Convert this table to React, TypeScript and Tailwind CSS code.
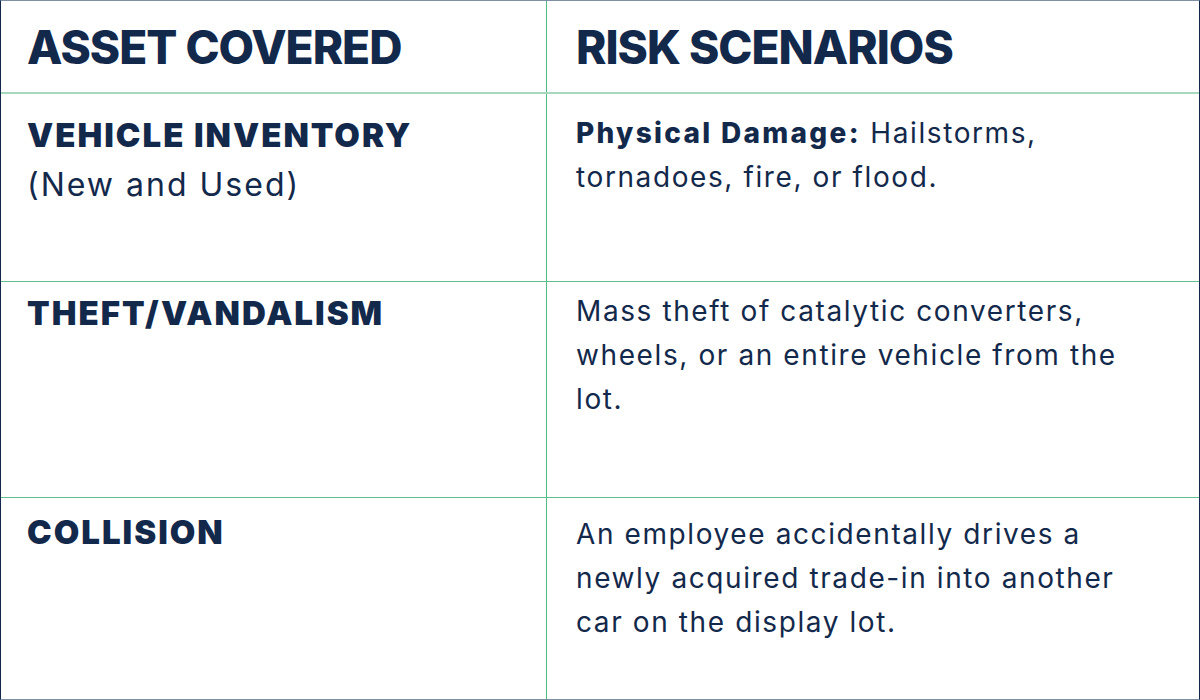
export default function App() {
  return (
    <div className="w-[1200px] h-[700px] bg-white text-[#13294b] font-['Inter',sans-serif] border-y border-y-[#7d8ea5] border-x border-x-[#13294b] overflow-hidden">
      {/* Header */}
      <div className="grid grid-cols-[546px_1fr] h-[93px] border-b-2 border-solid border-b-[#a6d8be]">
        <div className="border-r border-solid border-r-[#4fbb80] pl-[26px] flex items-center">
          <h2 className="text-[46px] font-extrabold tracking-[-1px] leading-none">ASSET COVERED</h2>
        </div>
        <div className="pl-[29px] flex items-center">
          <h2 className="text-[46px] font-extrabold tracking-[-1px] leading-none">RISK SCENARIOS</h2>
        </div>
      </div>

      {/* Vehicle inventory */}
      <div className="grid grid-cols-[546px_1fr] h-[188px] border-b border-solid border-b-[#5fc08c]">
        <div className="border-r border-solid border-r-[#4fbb80] pl-[26px] pt-[19px]">
          <div className="text-[33px] font-black tracking-[2px] leading-[44px]">VEHICLE INVENTORY</div>
          <div className="mt-[6px] text-[32px] tracking-[2px] leading-[44px]">(New and Used)</div>
        </div>
        <div className="pl-[29px] pt-[17px]">
          <p className="w-[575px] text-[28px] tracking-[1.6px] leading-[44px]">
            <span className="font-extrabold tracking-[2.3px]">Physical Damage:</span> Hailstorms, tornadoes, fire, or
            flood.
          </p>
        </div>
      </div>

      {/* Theft */}
      <div className="grid grid-cols-[546px_1fr] h-[216px] border-b border-solid border-b-[#5fc08c]">
        <div className="border-r border-solid border-r-[#4fbb80] pl-[26px] pt-[9px]">
          <div className="text-[33px] font-black tracking-[2px] leading-[44px]">THEFT/VANDALISM</div>
        </div>
        <div className="pl-[29px] pt-[7px]">
          <p className="w-[575px] text-[28px] tracking-[1.6px] leading-[44px]">
            Mass theft of catalytic converters, wheels, or an entire vehicle from the lot.
          </p>
        </div>
      </div>

      {/* Collision */}
      <div className="grid grid-cols-[546px_1fr] h-[201px]">
        <div className="border-r border-solid border-r-[#4fbb80] pl-[26px] pt-[12px]">
          <div className="text-[33px] font-black tracking-[2px] leading-[44px]">COLLISION</div>
        </div>
        <div className="pl-[29px] pt-[14px]">
          <p className="w-[575px] text-[28px] tracking-[1.6px] leading-[44px]">
            An employee accidentally drives a newly acquired trade-in into another car on the display lot.
          </p>
        </div>
      </div>
    </div>
  )
}
